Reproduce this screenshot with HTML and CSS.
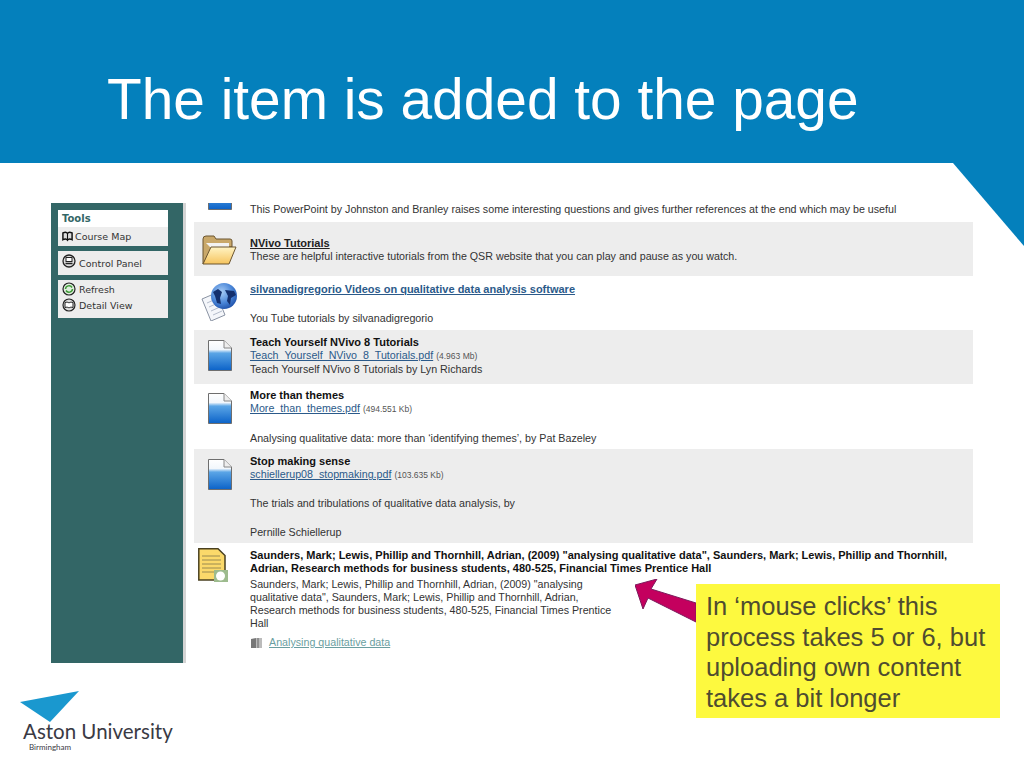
FILE: index.html
```html
<!DOCTYPE html>
<html lang="en">
<head>
    <meta charset="UTF-8">
    <meta name="viewport" content="width=device-width, initial-scale=1.0">
    <title>The item is added to the page</title>
    <link rel="stylesheet" href="styles.css">
</head>
<body>
    <!-- shared icons -->
    <svg class="icon-defs" width="0" height="0">
        <defs>
            <linearGradient id="doc-fill" x1="0" y1="0" x2="0" y2="1">
                <stop offset="0" stop-color="#ffffff"/>
                <stop offset="0.3" stop-color="#f2f7fc"/>
                <stop offset="0.42" stop-color="#5aa5e6"/>
                <stop offset="1" stop-color="#0b62c8"/>
            </linearGradient>
            <linearGradient id="folder-fill" x1="0" y1="0" x2="0" y2="1">
                <stop offset="0" stop-color="#fff4c4"/>
                <stop offset="1" stop-color="#f6c45e"/>
            </linearGradient>
            <radialGradient id="globe-fill" cx="0.4" cy="0.35" r="0.7">
                <stop offset="0" stop-color="#a9cdf5"/>
                <stop offset="0.6" stop-color="#4a86d8"/>
                <stop offset="1" stop-color="#1d4fa8"/>
            </radialGradient>
            <symbol id="doc" viewBox="0 0 24 31">
                <path d="M.5.5H16L23.5 8V30.500H.5Z" fill="url(#doc-fill)" stroke="#6e6e6e"/>
                <path d="M16 .5V8H23.500" fill="#eee" stroke="#888"/>
            </symbol>
        </defs>
    </svg>

    <header class="banner">
        <h1>The item is added to the page</h1>
    </header>
    <svg class="corner" width="71" height="83" viewBox="0 0 71 83"><path d="M0 0H71V83Z" fill="#0480bc"/></svg>

    <div class="lms">
        <aside class="sidebar">
            <div class="tool-card">
                <div class="tool-head">Tools</div>
                <div class="tool-row tool-row-map">
                    <svg class="tool-icon" width="11" height="11" viewBox="0 0 12 11"><path d="M1 1.500C3 .5 5 .5 6 2C7 .5 9 .5 11 1.500V9C9 8 7 8 6 9.500C5 8 3 8 1 9Z" fill="#ddd" stroke="#111" stroke-width="1.600"/><path d="M6 2V9" stroke="#111" stroke-width="1.200"/></svg>
                    Course Map
                </div>
            </div>
            <div class="tool-card tool-body tool-panel">
                <div class="tool-row">
                    <svg class="tool-icon raised" width="14" height="14" viewBox="0 0 14 14"><circle cx="7" cy="7" r="6" fill="#ddd" stroke="#222" stroke-width="1.300"/><rect x="4" y="3.500" width="6" height="4" fill="#fff" stroke="#222"/><path d="M3.500 9.500H10.500" stroke="#222" stroke-width="1.500"/></svg>
                    <span class="lowered">Control Panel</span>
                </div>
            </div>
            <div class="tool-card tool-body tool-views">
                <div class="tool-row">
                    <svg class="tool-icon" width="14" height="14" viewBox="0 0 14 14"><circle cx="7" cy="7" r="6" fill="#dfeedd" stroke="#222" stroke-width="1.200"/><path d="M3.500 7A3.500 3.500 0 0 1 10 5.500M10.500 7A3.500 3.500 0 0 1 4 8.500" fill="none" stroke="#3d9a35" stroke-width="1.500"/></svg>
                    Refresh
                </div>
                <div class="tool-row">
                    <svg class="tool-icon" width="14" height="14" viewBox="0 0 14 14"><circle cx="7" cy="7" r="6" fill="#ddd" stroke="#222" stroke-width="1.200"/><path d="M3 4.500C4.500 4 6 4 7 5C8 4 9.500 4 11 4.500V9.500C9.500 9 8 9 7 10C6 9 4.500 9 3 9.500Z" fill="#fff" stroke="#222"/></svg>
                    Detail View
                </div>
            </div>
        </aside>

        <main class="content">
            <div class="item item-top">
                <div class="item-icon">
                    <svg class="doc-stub" width="24" height="7" viewBox="0 24 24 7"><use href="#doc" width="24" height="31"/></svg>
                </div>
                <div class="item-text">
                    <p>This PowerPoint by Johnston and Branley raises some interesting questions and gives further references at the end which may be useful</p>
                </div>
            </div>

            <div class="item item-shaded item-middle">
                <div class="item-icon icon-folder">
                    <svg width="36" height="30" viewBox="0 0 36 30">
                        <path d="M2 29V4Q2 1 5 1H13L15 4H29Q31 4 31 6V12H12L2 29Z" fill="#c9a86a" stroke="#6b5530"/>
                        <path d="M5 8H28V13H10Z" fill="#f3f3f3"/>
                        <path d="M10 12H35L28 29H2Z" fill="url(#folder-fill)" stroke="#6b5530"/>
                    </svg>
                </div>
                <div class="item-text">
                    <a class="item-link strong-dark" href="#">NVivo Tutorials</a>
                    <p>These are helpful interactive tutorials from the QSR website that you can play and pause as you watch.</p>
                </div>
            </div>

            <div class="item item-web">
                <div class="item-icon icon-globe">
                    <svg width="37" height="38" viewBox="0 0 37 38">
                        <path d="M1 16L15 10L24 32L10 38Z" fill="#f4f6fa" stroke="#8a93a3"/>
                        <path d="M6 20L15 16M8 24L17 20M10 28L19 24M12 32L21 28" stroke="#b4bccb"/>
                        <circle cx="23" cy="13" r="13" fill="url(#globe-fill)"/>
                        <path d="M12 9L17 6L21 9L19 15L20 21L16 20L14 13ZM24 7L33 8L35 12L30 15L29 22L26 18L27 13Z" fill="#14306e"/>
                    </svg>
                </div>
                <div class="item-text">
                    <a class="item-link strong" href="#">silvanadigregorio Videos on qualitative data analysis software</a>
                    <p class="spaced">You Tube tutorials by silvanadigregorio</p>
                </div>
            </div>

            <div class="item item-shaded">
                <div class="item-icon icon-doc"><svg width="24" height="31"><use href="#doc"/></svg></div>
                <div class="item-text">
                    <div class="item-title">Teach Yourself NVivo 8 Tutorials</div>
                    <div><a class="item-link" href="#">Teach_Yourself_NVivo_8_Tutorials.pdf</a> <span class="file-size">(4.963 Mb)</span></div>
                    <p>Teach Yourself NVivo 8 Tutorials by Lyn Richards</p>
                </div>
            </div>

            <div class="item item-tight">
                <div class="item-icon icon-doc"><svg width="24" height="31"><use href="#doc"/></svg></div>
                <div class="item-text">
                    <div class="item-title">More than themes</div>
                    <div><a class="item-link" href="#">More_than_themes.pdf</a> <span class="file-size">(494.551 Kb)</span></div>
                    <p class="spaced">Analysing qualitative data: more than ‘identifying themes’, by Pat Bazeley</p>
                </div>
            </div>

            <div class="item item-shaded item-tall">
                <div class="item-icon icon-doc"><svg width="24" height="31"><use href="#doc"/></svg></div>
                <div class="item-text">
                    <div class="item-title">Stop making sense</div>
                    <div><a class="item-link" href="#">schiellerup08_stopmaking.pdf</a> <span class="file-size">(103.635 Kb)</span></div>
                    <p class="spaced spaced-less">The trials and tribulations of qualitative data analysis, by</p>
                    <p class="spaced">Pernille Schiellerup</p>
                </div>
            </div>

            <div class="item item-last">
                <div class="item-icon icon-note">
                    <svg width="30" height="34" viewBox="0 0 30 34">
                        <path d="M.8.8H20L27 7.500V32H.8Z" fill="#fbd96a" stroke="#4a4020" stroke-width="1.500"/>
                        <path d="M4 8H22M4 12H23M4 16H23M4 20H23M4 24H18" stroke="#9a8a50"/>
                        <rect x="16" y="22" width="14" height="12" fill="#9dbb8e"/>
                        <circle cx="22.500" cy="28" r="4.500" fill="#fff"/>
                    </svg>
                </div>
                <div class="item-text">
                    <div class="item-title">Saunders, Mark; Lewis, Phillip and Thornhill, Adrian, (2009) "analysing qualitative data", Saunders, Mark; Lewis, Phillip and Thornhill, Adrian, Research methods for business students, 480-525, Financial Times Prentice Hall</div>
                    <p class="citation">Saunders, Mark; Lewis, Phillip and Thornhill, Adrian, (2009) "analysing qualitative data", Saunders, Mark; Lewis, Phillip and Thornhill, Adrian, Research methods for business students, 480-525, Financial Times Prentice Hall</p>
                    <div class="attachment">
                        <svg width="13" height="12" viewBox="0 0 13 12"><path d="M1 2L6 1V11L1 11Z" fill="#777"/><path d="M6 1H12V11H6Z" fill="#bbb"/><path d="M8 1V11" stroke="#666"/></svg>
                        <a href="#">Analysing qualitative data</a>
                    </div>
                </div>
            </div>
        </main>
    </div>

    <footer class="logo">
        <svg class="logo-mark" width="60" height="32" viewBox="0 0 60 32"><path d="M0 11L59 0L30 31Z" fill="#1a98cf"/></svg>
        <div class="logo-name">Aston University</div>
        <div class="logo-city">Birmingham</div>
    </footer>

    <!-- callout sits over the screenshot -->
    <svg class="arrow" width="62" height="44" viewBox="0 0 62 44">
        <path d="M0 6L22 0L16 10L61 24V43L13 19L8 30Z" fill="#c4005e" stroke="#7d1a5c"/>
    </svg>
    <div class="callout">In ‘mouse clicks’ this process takes 5 or 6, but uploading own content takes a bit longer</div>
</body>
</html>
```

FILE: styles.css
```css
html, body {
    margin: 0;
    padding: 0;
}
body {
    position: relative;
    width: 1024px;
    height: 768px;
    overflow: hidden;
    background: white;
    font-family: "Liberation Sans", Arial, sans-serif;
}
.icon-defs {
    position: absolute;
}
.banner {
    box-sizing: border-box;
    height: 163px;
    padding: 36px 0 0 107px;
    display: flex;
    align-items: center;
    background: #0480bc;
}
.banner h1 {
    margin: 0;
    font-size: 56.800px;
    font-weight: normal;
    color: white;
}
.corner {
    position: absolute;
    top: 163px;
    right: 0;
}

.lms {
    display: flex;
    width: 922px;
    height: 460px;
    margin: 40px 0 0 51px;
}
.sidebar {
    width: 110px;
    padding: 7px 15px 0 7px;
    flex-shrink: 0;
    box-sizing: content-box;
    background: #336666;
    border-right: 3px solid #d4d4d4;
    font-family: "DejaVu Sans", Verdana, sans-serif;
    font-size: 9.500px;
    color: #333;
}
.tool-card {
    background: #ededed;
    margin-bottom: 5px;
}
.tool-head {
    height: 17px;
    line-height: 17px;
    padding-left: 4px;
    background: white;
    font-size: 10px;
    font-weight: bold;
    color: #336666;
}
.tool-row {
    display: flex;
    align-items: center;
    gap: 3px;
    height: 16px;
    padding-left: 4px;
}
.tool-row-map {
    height: 19px;
    gap: 2px;
}
.tool-panel {
    height: 24px;
    padding-top: 1px;
    box-sizing: border-box;
}
.tool-panel .tool-row {
    height: 22px;
}
.tool-views {
    height: 38px;
    padding-top: 1px;
    box-sizing: border-box;
}
.tool-icon {
    flex-shrink: 0;
}
.raised {
    margin-top: -4px;
}
.lowered {
    margin-top: 1px;
}

.content {
    flex: 1;
    margin-left: 8px;
    font-size: 10.700px;
    line-height: 13px;
    color: #333;
}
.item {
    display: flex;
    box-sizing: border-box;
    height: 54px;
    padding-top: 6px;
}
.item-shaded {
    background: #ededed;
}
.item-top {
    height: 19px;
    padding-top: 0;
    overflow: hidden;
}
.item-middle {
    align-items: center;
    padding-top: 2px;
}
.item-web {
    padding-top: 7px;
}
.item-tight {
    height: 65px;
    padding-top: 5px;
}
.item-tall {
    height: 94px;
}
.item-last {
    height: 120px;
}
.item-icon {
    flex: 0 0 56px;
    box-sizing: border-box;
    display: flex;
    justify-content: center;
    align-items: flex-start;
}
.icon-doc {
    padding: 4px 4px 0 0;
}
.icon-folder {
    padding-right: 6px;
    margin-top: -1px;
}
.icon-globe {
    padding-right: 6px;
}
.icon-note {
    padding-right: 18px;
    margin-top: -1px;
}
.item-top .item-icon {
    padding-right: 4px;
}
.item-text {
    flex: 1;
    padding-right: 16px;
}
.item-text p {
    margin: 0;
}
.item-text p.spaced {
    margin-top: 16px;
}
.item-text p.spaced-less {
    margin-top: 15px;
}
.item-title {
    font-size: 11px;
    font-weight: bold;
    color: #111;
}
.item-link {
    color: #2b5a8a;
    text-decoration: underline;
}
.strong {
    font-size: 11px;
    font-weight: bold;
}
.strong-dark {
    font-size: 11px;
    font-weight: bold;
    color: #222;
}
.file-size {
    font-size: 8.500px;
    color: #555;
}
.item-text p.citation {
    width: 368px;
    margin-top: 3px;
}
.attachment {
    display: flex;
    align-items: center;
    gap: 6px;
    margin-top: 6px;
}
.attachment a {
    color: #6a9ea0;
    text-decoration: underline;
}

.logo {
    margin: 28px 0 0 20px;
    color: #3a3a44;
    font-family: Lato, sans-serif;
}
.logo-mark {
    display: block;
}
.logo-name {
    margin: -2px 0 0 3px;
    font-size: 20.500px;
    line-height: 20px;
}
.logo-city {
    margin: 1px 0 0 9px;
    font-size: 8px;
    line-height: 10px;
}

.arrow {
    position: absolute;
    left: 635px;
    top: 579px;
}
.callout {
    position: absolute;
    left: 696px;
    top: 584px;
    width: 304px;
    height: 134px;
    box-sizing: border-box;
    padding: 7px 8px 0 10px;
    background: #fdf93f;
    color: #4f4c30;
    font-size: 25.500px;
    line-height: 30.700px;
}
```
